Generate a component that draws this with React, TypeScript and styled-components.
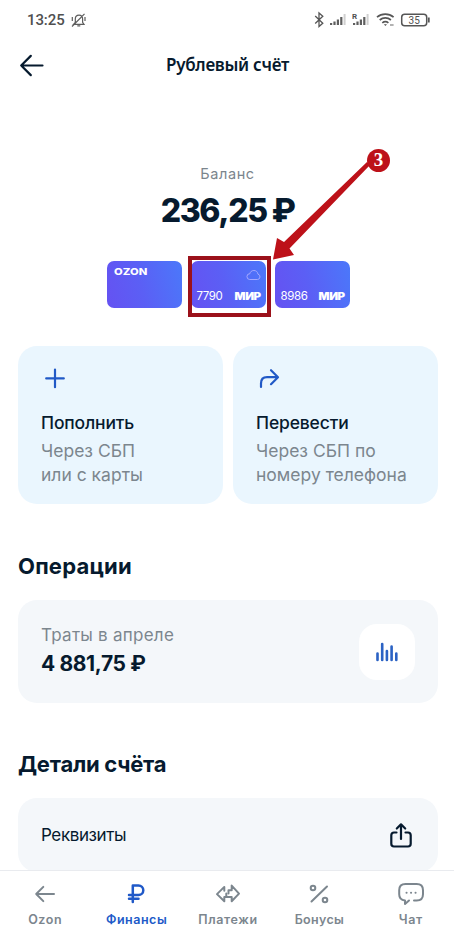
import React from 'react';
import styled, { createGlobalStyle } from 'styled-components';

const GlobalStyle = createGlobalStyle`
  * {
    box-sizing: border-box;
  }

  body {
    margin: 0;
    background: #fff;
    font-family: 'Inter', 'Noto Sans', sans-serif;
    color: #061a2e;
  }
`;

const Screen = styled.div`
  position: relative;
  display: flex;
  flex-direction: column;
  width: 454px;
  height: 936px;
  overflow: hidden;
  background: #fff;
`;

const StatusBar = styled.div`
  display: flex;
  justify-content: space-between;
  align-items: center;
  flex: none;
  height: 40px;
  padding: 0 24px 0 27px;
  color: #505050;
`;

const StatusLeft = styled.div`
  display: flex;
  align-items: center;
  gap: 6px;
`;

const Clock = styled.span`
  font-family: Roboto, sans-serif;
  font-size: 15px;
  font-weight: 500;
  line-height: 20px;
  letter-spacing: -0.1px;
`;

const Header = styled.header`
  display: grid;
  grid-template-columns: 28px 1fr 28px;
  align-items: center;
  flex: none;
  height: 50px;
  padding: 0 17px 0 18px;
`;

const Title = styled.h1`
  margin: 0;
  font-family: 'Noto Sans', sans-serif;
  font-size: 17px;
  font-weight: 600;
  line-height: 24px;
  letter-spacing: -0.3px;
  text-align: center;
`;

const Balance = styled.section`
  display: flex;
  flex-direction: column;
  align-items: center;
  flex: none;
  padding: 74px 0 0 1px;
`;

const BalanceLabel = styled.div`
  font-size: 14.5px;
  line-height: 20px;
  letter-spacing: 0.6px;
  color: #7b858d;
`;

const BalanceValue = styled.div`
  margin-top: 7px;
  font-size: 32px;
  font-weight: 800;
  line-height: 40px;
  letter-spacing: -1.35px;
  word-spacing: -1px;
`;

const CardRow = styled.div`
  display: flex;
  justify-content: center;
  gap: 9px;
  flex: none;
  margin-top: 30px;
  padding-left: 2px;
`;

const BankCard = styled.div`
  position: relative;
  display: flex;
  flex-direction: column;
  justify-content: space-between;
  width: 75px;
  height: 47px;
  padding: 6px 5px 6px 6px;
  border-radius: 7px;
  background: linear-gradient(75deg, #6552f2 0%, #5b5ff5 45%, #4b78fa 100%);
  color: #fff;
`;

const CardTop = styled.div`
  display: flex;
  height: 12px;
  justify-content: space-between;
`;

const CardBottom = styled.div`
  display: flex;
  justify-content: space-between;
  align-items: center;
  height: 12px;
`;

const OzonMark = styled.span`
  font-size: 9px;
  font-weight: 800;
  line-height: 10px;
  letter-spacing: 0;
  transform: scaleX(1.25);
  transform-origin: left;
  margin-left: 1px;
`;

const CardNumber = styled.span`
  font-size: 11.5px;
  line-height: 12px;
  letter-spacing: -0.4px;
`;

const MirMark = styled.span`
  font-size: 10px;
  font-weight: 900;
  line-height: 12px;
  letter-spacing: -0.4px;
  transform: scaleX(1.15);
  transform-origin: right;
`;

const Highlight = styled.div`
  position: absolute;
  inset: -5px -5px -9px -3px;
  border: 4px solid #9b111a;
`;

const Actions = styled.div`
  display: grid;
  grid-template-columns: 205px 205px;
  gap: 10px;
  flex: none;
  margin: 38px 0 0 18px;
`;

const ActionTile = styled.div`
  height: 158px;
  padding: 19px 23px 0;
  border-radius: 19px;
  background: #eaf6fe;
`;

const ActionIcon = styled.svg`
  display: block;
`;

const ActionTitle = styled.div`
  margin-top: 19px;
  font-size: 17.5px;
  font-weight: 500;
  line-height: 26px;
  letter-spacing: -0.15px;
`;

const ActionText = styled.div`
  margin-top: 3px;
  font-size: 17.5px;
  line-height: 24px;
  color: #7c868e;
  white-space: pre-line;
`;

const SectionTitle = styled.h2<{ $top: number; $spacing: number }>`
  flex: none;
  margin: ${({ $top }) => $top}px 0 0 18px;
  font-size: 22px;
  font-weight: 700;
  line-height: 30px;
  letter-spacing: ${({ $spacing }) => $spacing}px;
`;

const Panel = styled.div<{ $height: number }>`
  display: flex;
  justify-content: space-between;
  align-items: center;
  flex: none;
  height: ${({ $height }) => $height}px;
  margin: 19px 16px 0 18px;
  padding: 0 23px;
  border-radius: 19px;
  background: #f4f7fa;
`;

const SpendLabel = styled.div`
  font-size: 17px;
  line-height: 24px;
  letter-spacing: 0.25px;
  color: #7c868e;
`;

const SpendValue = styled.div`
  margin: 3px 0 2px;
  font-size: 21px;
  font-weight: 700;
  line-height: 28px;
  letter-spacing: -0.35px;
`;

const ChartButton = styled.div`
  display: flex;
  justify-content: center;
  align-items: center;
  width: 56px;
  height: 56px;
  border-radius: 18px;
  background: #fff;
`;

const DetailsLabel = styled.div`
  font-size: 17px;
  line-height: 24px;
  letter-spacing: -0.4px;
`;

const DetailsWindow = styled.div`
  flex: 1;
  min-height: 0;
  overflow: hidden;
`;

const TabBar = styled.nav`
  display: grid;
  grid-template-columns: repeat(5, 91.4px);
  justify-content: center;
  flex: none;
  height: 66px;
  padding-left: 2px;
  border-top: 1px solid #e9ebef;
  background: #fff;
`;

const Tab = styled.div<{ $active?: boolean }>`
  display: flex;
  flex-direction: column;
  align-items: center;
  padding-top: 9px;
  color: ${({ $active }) => ($active ? '#2059c8' : '#7c868e')};
`;

const TabLabel = styled.span<{ $spacing?: number }>`
  margin-top: 3px;
  font-size: 12.5px;
  font-weight: 600;
  line-height: 18px;
  letter-spacing: ${({ $spacing = 0 }) => $spacing}px;
`;

const Pointer = styled.svg`
  position: absolute;
  left: 266px;
  top: 145px;
`;

const Step = styled.div`
  position: absolute;
  left: 367px;
  top: 149px;
  width: 23px;
  height: 23px;
  border-radius: 50%;
  background: #bd1119;
  color: #fff;
  font-family: 'Liberation Serif', serif;
  font-size: 19px;
  font-weight: 700;
  line-height: 22px;
  text-align: center;
`;

const Signal = ({ roaming }: { roaming?: boolean }) => (
    <svg width="18" height="16" viewBox="0 0 18 16">
        <g fill="#5e5e5e">
            <path d="M1 13h2.2v-2H1zM4.4 13h2.2V9.5H4.4zM7.8 13H10V7.5H7.8zM11.2 13h2.200V5h-2.200z" />
            <path d="M14.600 13h2V2h-2z" fill="#d0d0d0" />
        </g>
        {roaming && (
            <text x="0" y="6.500" fontSize="8" fontWeight="700" fontFamily="Roboto" fill="#505050">R</text>
        )}
    </svg>
);

const StatusIcons = () => (
    <svg width="116" height="20" viewBox="314 10 116 20" fill="none" stroke="#565656">
        <path d="M315.2 16l7.600 7.200-3.800 3.300V13l3.800 3.200-7.600 7.300" strokeWidth="1.300" />
        <svg x="329" y="12" width="18" height="16" stroke="none"><Signal /></svg>
        <svg x="352" y="12" width="18" height="16" stroke="none"><Signal roaming /></svg>
        <g strokeWidth="1.700">
            <path d="M377 17.200c4.800-4 11.800-4 16.600 0M379.700 20c3.300-2.700 8-2.700 11.200 0M382.300 22.800c1.800-1.500 4.300-1.500 6.100 0" />
            <path d="M383.800 24.300h3.200l-1.600 1.800z" fill="#565656" stroke="none" />
            <path d="M390 25h3.600" strokeWidth="1.500" stroke="#999" />
        </g>
        <rect x="401.700" y="14.200" width="25" height="11.600" rx="3" strokeWidth="1.500" />
        <path d="M428.800 17.500v5" strokeWidth="1.800" />
        <text x="414.200" y="23.500" textAnchor="middle" fontFamily="Roboto" fontSize="10" fill="#505050" stroke="none">35</text>
    </svg>
);

const BellOff = () => (
    <svg width="15" height="15" viewBox="0 0 15 15" fill="none" stroke="#5d5d5d" strokeWidth="1.200">
        <path d="M2.500 11.300h10.500l-1.400-2V6c0-2.300-1.500-3.900-3.600-3.900S4.300 3.700 4.300 6v3.300zM6.300 12.800h3M1 13.500L13.500.8M1.300 4v4M14 4v4" />
    </svg>
);

const BackArrow = () => (
    <svg width="28" height="28" viewBox="0 0 28 28" fill="none" stroke="currentColor" strokeWidth="2.200" strokeLinecap="round" strokeLinejoin="round">
        <path d="M24.500 14.500H3.200M12.800 4.900L3.200 14.500l9.600 9.600" />
    </svg>
);

const actions = [
    {
        title: 'Пополнить',
        text: 'Через СБП\nили с карты',
        icon: <path d="M14 4.600v17.600M5.200 13.400h17.600" />,
    },
    {
        title: 'Перевести',
        text: 'Через СБП по\nномеру телефона',
        icon: <path d="M5 22v-3.500c0-4.500 2-6.300 6-6.300h10.800M15 5.200l7 7-7 7" />,
    },
];

const tabs = [
    {
        label: 'Ozon',
        spacing: 0.6,
        icon: <path d="M23 14H5.200M12.300 6.900L5.200 14l7.100 7.100" />,
    },
    {
        label: 'Финансы',
        active: true,
        spacing: 0.5,
        icon: <path d="M9.800 22V5.500h5.700a4.800 4.800 0 0 1 0 9.600H6M6 18.700h9.500" strokeWidth="2.500" />,
    },
    {
        label: 'Платежи',
        spacing: 0.6,
        icon: <path d="M10.300 10.700V6.900L3 14.100l7.300 7.100v-4.300h2M17.700 17v4.200L25 13.600l-7.300-8v4.600h-3.200v3.300M12.300 13.600v3.300h5.400" />,
    },
    {
        label: 'Бонусы',
        spacing: 0.3,
        icon: (
            <g>
                <path d="M22 6.500L6.500 21.500" />
                <circle cx="8" cy="8" r="2.300" />
                <circle cx="20" cy="20" r="2.300" />
            </g>
        ),
    },
    {
        label: 'Чат',
        spacing: 0.7,
        icon: (
            <g>
                <path d="M17 20.500h2.700c4.200 0 6.300-2.100 6.300-6.200v-4c0-4.100-2.100-6.200-6.300-6.200H8.500c-4.200 0-6.300 2.100-6.300 6.200v4c0 4 1.900 6 5.800 6.200V24l4-3.500" />
                <path d="M9.500 12.800h.1M14 12.800h.1M18.500 12.800h.1" />
            </g>
        ),
    },
];

const App: React.FC = () => {
    return (
        <Screen>
            <GlobalStyle />
            <StatusBar>
                <StatusLeft>
                    <Clock>13:25</Clock>
                    <BellOff />
                </StatusLeft>
                <StatusIcons />
            </StatusBar>

            <Header>
                <BackArrow />
                <Title>Рублевый счёт</Title>
            </Header>

            <Balance>
                <BalanceLabel>Баланс</BalanceLabel>
                <BalanceValue>236,25 ₽</BalanceValue>
            </Balance>

            <CardRow>
                <BankCard>
                    <CardTop>
                        <OzonMark>OZON</OzonMark>
                    </CardTop>
                </BankCard>
                <BankCard>
                    <CardTop>
                        <span />
                        <svg width="15" height="14" viewBox="0 0 15 14" fill="none" stroke="#a5a8ff">
                            <path d="M3.800 12.500h7.700a2.700 2.700 0 0 0 .5-5.300C11.600 4.800 10 3.500 7.900 3.500S4.200 4.800 3.900 6.700a2.900 2.900 0 0 0-.1 5.800z" />
                        </svg>
                    </CardTop>
                    <CardBottom>
                        <CardNumber>7790</CardNumber>
                        <MirMark>МИР</MirMark>
                    </CardBottom>
                    <Highlight />
                </BankCard>
                <BankCard>
                    <CardTop />
                    <CardBottom>
                        <CardNumber>8986</CardNumber>
                        <MirMark>МИР</MirMark>
                    </CardBottom>
                </BankCard>
            </CardRow>

            <Actions>
                {actions.map((action) => (
                    <ActionTile key={action.title}>
                        <ActionIcon width="28" height="26" viewBox="0 0 28 26" fill="none" stroke="#2159c6" strokeWidth="2.200" strokeLinecap="round" strokeLinejoin="round">
                            {action.icon}
                        </ActionIcon>
                        <ActionTitle>{action.title}</ActionTitle>
                        <ActionText>{action.text}</ActionText>
                    </ActionTile>
                ))}
            </Actions>

            <SectionTitle $top={47} $spacing={0.2}>Операции</SectionTitle>
            <Panel $height={103}>
                <div>
                    <SpendLabel>Траты в апреле</SpendLabel>
                    <SpendValue>4 881,75 ₽</SpendValue>
                </div>
                <ChartButton>
                    <svg width="24" height="24" viewBox="0 0 24 24" stroke="#2b62c4" strokeWidth="2.600" strokeLinecap="round">
                        <path d="M2.500 13.500v6.500M7.200 4v16M11.900 11v9M16.600 6.500v13.500M21.300 13.500v6.500" />
                    </svg>
                </ChartButton>
            </Panel>

            <SectionTitle $top={46} $spacing={-0.25}>Детали счёта</SectionTitle>
            <DetailsWindow>
                <Panel $height={74}>
                    <DetailsLabel>Реквизиты</DetailsLabel>
                    <svg width="28" height="28" viewBox="0 -1 28 28" fill="none" stroke="#061a2e" strokeWidth="2.200" strokeLinecap="round" strokeLinejoin="round">
                        <path d="M9.500 10.500H7c-1.800 0-2.700.9-2.700 2.700v8.600c0 1.800.9 2.700 2.700 2.700h14c1.800 0 2.700-.9 2.700-2.700v-8.600c0-1.800-.9-2.700-2.700-2.700h-2.500M14 17V2.500M9.800 6.500L14 2.300l4.200 4.200" />
                    </svg>
                </Panel>
            </DetailsWindow>

            <TabBar>
                {tabs.map((tab) => (
                    <Tab key={tab.label} $active={tab.active}>
                        <svg width="28" height="28" viewBox="0 0 28 28" fill="none" stroke="currentColor" strokeWidth="2" strokeLinecap="round" strokeLinejoin="round">
                            {tab.icon}
                        </svg>
                        <TabLabel $spacing={tab.spacing}>{tab.label}</TabLabel>
                    </Tab>
                ))}
            </TabBar>

            <Pointer width="115" height="120" viewBox="266 145 115 120">
                <path d="M367 162l3 3L289.500 248.500l4.500 6.500-21 4.500 4-21.500 7 4z" fill="#bd1119" />
            </Pointer>
            <Step>3</Step>
        </Screen>
    );
};

export default App;
